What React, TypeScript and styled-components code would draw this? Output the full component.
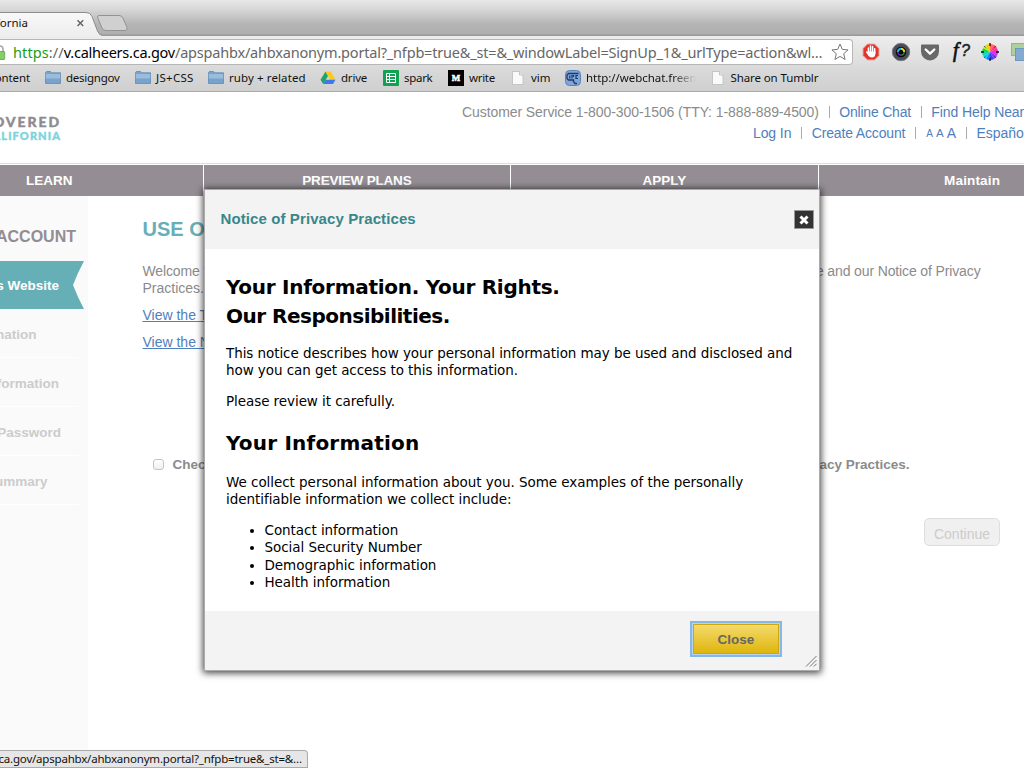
import React from 'react';
import styled, { createGlobalStyle, css } from 'styled-components';

const ui = `'Noto Sans', 'Open Sans', sans-serif`;
const arial = `'Liberation Sans', Arial, sans-serif`;
const verdana = `'DejaVu Sans', Verdana, sans-serif`;

const Global = createGlobalStyle`
  * { box-sizing: border-box; }
  body { margin: 0; background: #fff; overflow: hidden; }
`;

const Window = styled.div`
  position: relative;
  width: 1024px;
  height: 768px;
  overflow: hidden;
  display: flex;
  flex-direction: column;
  font-family: ${arial};
`;

const T = styled.span<{ $ls?: number }>`
  white-space: pre;
  letter-spacing: ${(p) => p.$ls ?? 0}px;
`;

/* browser chrome */
const TabStrip = styled.div`
  height: 36px;
  flex: none;
  background: linear-gradient(#e8e8e8 0, #dadada 8px, #b5b5b5 24px, #aeaeae 34px, #999 35px);
  display: flex;
`;
const Tab = styled.div`
  position: relative;
  width: 128px;
  height: 36px;
  display: flex;
  align-items: center;
  padding-top: 9px;
  font: 11.5px/20px ${ui};
  color: #111;
  svg { position: absolute; left: 0; top: 0; }
`;
const TabTitle = styled.div`
  position: relative;
  width: 28px;
  display: flex;
  justify-content: flex-end;
`;
const Toolbar = styled.div`
  height: 30px;
  flex: none;
  display: flex;
  align-items: flex-start;
  background: linear-gradient(#ededed, #dcdcdc);
  padding-top: 3px;
`;
const Omnibox = styled.div`
  width: 853px;
  height: 26px;
  flex: none;
  background: #fff;
  border: 1px solid #b6b6b6;
  border-left: 0;
  border-radius: 0 4px 4px 0;
  display: flex;
  align-items: center;
  font: 14.5px/24px ${ui};
  color: #666;
`;
const Lock = styled.div`
  width: 13px;
  height: 22px;
`;
const Address = styled.div`
  width: 818px;
  display: flex;
  .secure { color: #16a016; }
  .host { color: #000; }
`;
const Extensions = styled.div`
  display: flex;
  padding: 2px 0 0 7px;
  width: 171px;
  overflow: hidden;
`;
const ExtIcon = styled.div`
  width: 29.7px;
  flex: none;
  height: 22px;
  svg { display: block; }
`;
const Bookmarks = styled.div`
  height: 26px;
  flex: none;
  display: flex;
  align-items: center;
  background: linear-gradient(#dbdbdb, #cfcfcf);
  border-bottom: 1px solid #a9a9a9;
  padding-bottom: 2px;
  font: 11.5px/20px ${ui};
  color: #111;
  overflow: hidden;
`;
const Bookmark = styled.div<{ $w: number; $fade?: boolean }>`
  width: ${(p) => p.$w}px;
  flex: none;
  display: flex;
  align-items: center;
  gap: 5px;
  svg { flex: none; }
  ${(p) => p.$fade && css`
    span { width: 110px; overflow: hidden; mask-image: linear-gradient(90deg, #000 85px, transparent 110px); }
  `}
`;
const CutBookmark = styled(Bookmark)`
  span { width: 30px; display: flex; justify-content: flex-end; }
`;

/* site header */
const SiteHeader = styled.div`
  height: 72px;
  flex: none;
  display: flex;
  border-bottom: 1px solid #ddd;
  overflow: hidden;
`;
const Logo = styled.div`
  width: 61px;
  height: 60px;
  padding-top: 22px;
  display: flex;
  flex-direction: column;
  align-items: flex-end;
  font: bold 14px/15px Lato, ${arial};
  font-weight: 900;
  color: #8f8a90;
  -webkit-text-stroke: 0.4px;
  div + div { font-size: 11px; line-height: 13px; color: #7fd3dc; }
`;
const Utility = styled.div`
  width: 963px;
  padding-top: 10px;
  font-size: 14px;
  line-height: 21px;
  color: #8b8b8b;
`;
const UtilityRow = styled.div<{ $indent: number }>`
  display: flex;
  width: 963px;
  overflow: hidden;
  padding-left: ${(p) => p.$indent}px;
  a { color: #4f80bd; }
`;
const Bar = styled.i<{ $m?: number }>`
  flex: none;
  width: 1px;
  height: 12px;
  margin: 4px ${(p) => p.$m ?? 9.7}px 0;
  background: #aaa;
`;
const SizeA = styled.a<{ $s: number }>`
  font-size: ${(p) => p.$s}px;
  margin-right: ${(p) => (p.$s > 12 ? 0 : 3)}px;
`;
const Nav = styled.div`
  height: 32px;
  flex: none;
  border-top: 1px solid #fff;
  display: flex;
  margin-left: -104px;
`;
const NavItem = styled.div<{ $ls?: number }>`
  width: 307.6px;
  flex: none;
  background: #948e94;
  border-right: 1px solid #fff;
  color: #fff;
  font-weight: bold;
  font-size: 13.5px;
  line-height: 32px;
  height: 31px;
  letter-spacing: ${(p) => p.$ls ?? 0}px;
  text-align: center;
`;

/* page */
const Page = styled.div`
  flex: 1;
  display: flex;
  overflow: hidden;
`;
const Sidebar = styled.div`
  width: 88px;
  background: #fafafa;
  font-weight: bold;
  overflow: hidden;
`;
const SideHeading = styled.div`
  width: 76px;
  height: 65px;
  padding-top: 16px;
  display: flex;
  justify-content: flex-end;
  font-size: 16px;
  line-height: 49px;
  color: #938d93;
`;
const Step = styled.div<{ $end: number; $active?: boolean }>`
  width: ${(p) => (p.$active ? 84 : 79)}px;
  height: ${(p) => (p.$active ? 48 : 49)}px;
  padding-right: ${(p) => (p.$active ? 84 : 79) - p.$end}px;
  display: flex;
  justify-content: flex-end;
  overflow: hidden;
  font-size: 13.5px;
  line-height: ${(p) => (p.$active ? 49 : 51)}px;
  color: ${(p) => (p.$active ? '#fff' : '#ccc')};
  ${(p) => p.$active
    ? css`background: #66afb7; clip-path: polygon(0 0, 100% 0, 78px 25%, 73px 50%, 78px 75%, 100% 100%, 0 100%);`
    : css`border-bottom: 1px solid #fff;`}
`;
const Main = styled.div`
  width: 936px;
  padding: 20px 24px 0 54.5px;
  font-size: 14px;
  line-height: 17px;
  color: #8b8b8b;
`;
const Title = styled.div`
  font-size: 20px;
  font-weight: bold;
  line-height: 27px;
  color: #66afb7;
  margin-bottom: 20px;
`;
const Spread = styled.div<{ $w: number }>`
  width: ${(p) => p.$w}px;
  display: flex;
  justify-content: space-between;
`;
const DocLink = styled.a`
  display: block;
  margin-top: 10px;
  color: #4f80bd;
  text-decoration: underline;
`;
const Consent = styled.div`
  margin: 105px 0 0 10px;
  display: flex;
  align-items: center;
  gap: 9px;
  font-weight: bold;
  font-size: 13.5px;
`;
const Check = styled.i`
  width: 11px;
  height: 11px;
  border: 1px solid #c4c4c4;
  border-radius: 3px;
  background: linear-gradient(#fff, #f0f0f0);
`;
const Continue = styled.button`
  display: block;
  margin: 45px 0 0 auto;
  width: 76px;
  height: 28px;
  padding: 4px 0 0;
  border: 1px solid #dedede;
  border-radius: 5px;
  background: #f0f0f0;
  color: #ccc;
  font: 14px ${arial};
`;

/* dialog */
const Dialog = styled.div`
  position: absolute;
  left: 204px;
  top: 189px;
  width: 616px;
  height: 482px;
  background: #fff;
  border: 1px solid #aaa;
  box-shadow: 0 1px 7px 1px rgba(0, 0, 0, 0.75);
  display: flex;
  flex-direction: column;
`;
const DialogHead = styled.div`
  height: 59px;
  padding: 0 5px 0 15.5px;
  background: #f3f3f3;
  display: flex;
  align-items: center;
  justify-content: space-between;
  font-weight: bold;
  font-size: 15px;
  color: #37878b;
  > span { padding-bottom: 3px; }
`;
const CloseBox = styled.button`
  width: 20px;
  height: 19px;
  padding: 0;
  border: 1px solid #999;
  background: #333;
  svg { display: block; margin: auto; }
`;
const DialogBody = styled.div`
  height: 362px;
  padding: 24px 21px 0;
  font: 13.5px/17.3px ${verdana};
  color: #000;
  h2 { margin: 0; font-size: 20px; line-height: 29px; }
  p { margin: 14px 0 0; letter-spacing: -0.07px; }
  p + p { margin-top: 13px; }
  p + h2 { margin: 19px 0 0; }
  h2:nth-of-type(2) + p { margin-top: 16px; letter-spacing: -0.05px; }
  p span { letter-spacing: inherit; }
  ul { margin: 13.5px 0 0; padding-left: 38.5px; letter-spacing: -0.05px; }
`;
const DialogFoot = styled.div`
  height: 59px;
  background: #f3f3f3;
  display: flex;
  justify-content: flex-end;
  padding: 13px 40px 0 0;
`;
const CloseButton = styled.button`
  width: 86px;
  height: 30px;
  padding: 0;
  background: linear-gradient(#f4da6c, #dfb60d);
  border: 1px solid #cda70d;
  box-shadow: 0 0 0 1px #b9d4ef, 0 0 0 3px #86b7e6;
  font: bold 13.5px ${arial};
  color: #666;
`;
const Grip = styled.svg`
  position: absolute;
  right: 2px;
  bottom: 3px;
`;
const Status = styled.div`
  position: absolute;
  left: 0;
  bottom: 0;
  width: 308px;
  height: 18px;
  padding-right: 5px;
  display: flex;
  justify-content: flex-end;
  overflow: hidden;
  background: #e6e6e6;
  border: 1px solid #aaa;
  border-width: 1px 1px 1px 0;
  border-radius: 0 4px 0 0;
  font: 11.5px/16px ${ui};
  color: #111;
`;

const Folder = () => (
  <svg width="16" height="16" viewBox="0 0 16 16">
    <path d="M.5 3.2V2.5l1-1h4l1 1.3h9v10.7H.5z" fill="#78a3cc" stroke="#5e8ab5" strokeWidth=".8" />
    <path d="M.8 4h14.4v4.5H.8z" fill="#9bbddd" />
  </svg>
);
const Sheet = () => (
  <svg width="16" height="16" viewBox="0 0 16 16">
    <path d="M2.5 1.5h7l3.5 3.5v9.500H2.5z" fill="#fafafa" stroke="#bbb" strokeWidth=".8" />
    <path d="M9.5 1.5v3.500H13" fill="#e8e8e8" stroke="#bbb" strokeWidth=".8" />
  </svg>
);
const Drive = () => (
  <svg width="16" height="16" viewBox="0 0 16 16">
    <path d="M5.5 1.5 8 6 3.2 14 .5 9.700z" fill="#20a464" />
    <path d="M5.5 1.5h5l5 8.300h-5z" fill="#fbc916" />
    <path d="M5.6 9.800h9.900L13 14H3.200z" fill="#3d79e8" />
  </svg>
);
const Spark = () => (
  <svg width="16" height="16" viewBox="0 0 16 16">
    <rect width="16" height="16" rx="1" fill="#10a252" />
    <path d="M3.5 3.5h9v9h-9zM3.5 6.5h9M3.5 9.5h9M6.5 3.5v9" fill="none" stroke="#fff" strokeWidth="1" />
  </svg>
);
const Medium = () => (
  <svg width="16" height="16" viewBox="0 0 16 16">
    <rect width="16" height="16" fill="#000" />
    <text x="8" y="11.2" fontSize="9" fontWeight="bold" fontFamily="Liberation Serif, serif" textAnchor="middle" fill="#fff" stroke="#fff" strokeWidth=".5">M</text>
  </svg>
);
const Irc = () => (
  <svg width="16" height="16" viewBox="0 0 16 16">
    <rect x=".5" y=".5" width="15" height="15" rx="4" fill="#7ea6dc" stroke="#5b82b9" />
    <path d="M13.500 3.500H3.500L2 5v3.500L3.500 10h5v1.500l1.500 2h2" fill="none" stroke="#26385f" strokeWidth="1.300" />
    <path d="M4.800 5.500v3M7 8.500v-3h1.500v1.500M13 5.500h-2v3h2" fill="none" stroke="#26385f" strokeWidth="1.200" />
  </svg>
);

const wheel = ['#ff6a5a', '#ff3a6a', '#ff2ab0', '#e02aff', '#8a2aff', '#3a3cff', '#1a7aff', '#12c6f0', '#12e0a0', '#14d84a', '#b8e81a', '#ffc800'];
const Wheel = () => (
  <svg width="22" height="22" viewBox="-11 -11 22 22">
    {wheel.map((c, i) => {
      const a = ((i * 30 - 90) * Math.PI) / 180;
      const b = a + Math.PI / 6;
      return <path key={i} d={`M0 0L${8 * Math.cos(a)} ${8 * Math.sin(a)}A8 8 0 0 1 ${8 * Math.cos(b)} ${8 * Math.sin(b)}z`} fill={c} />;
    })}
    <path d="M0-9v3M0 9V6M-9 0h3M9 0H6" stroke="#111" strokeWidth="1.300" />
    <path d="M-6-6l1.500 1.500M6-6l-1.500 1.500M-6 6l1.500-1.500M6 6l-1.500-1.500" stroke="#333" strokeWidth=".7" />
  </svg>
);

const steps: [string, number][] = [
  ['Account Information', 36.5],
  ['Contact Information', 59],
  ['User ID & Password', 61],
  ['Account Summary', 47.5],
];

export default function App() {
  return (
    <Window>
      <Global />
      <TabStrip>
        <Tab>
          <svg width="128" height="36" viewBox="0 0 128 36">
            <defs>
              <linearGradient id="tab" x1="0" y1="0" x2="0" y2="1">
                <stop offset="0" stopColor="#f8f8f8" />
                <stop offset="1" stopColor="#ededed" />
              </linearGradient>
            </defs>
            <path d="M-1 12.500H86q4.500 0 6 4L97.500 31q2 4.500 5 4.500V37H-1z" fill="url(#tab)" />
            <path d="M-1 12.500H86q4.500 0 6 4L97.500 31q2 4.500 5 4.500" fill="none" stroke="#8d8d8d" />
            <path d="M99 15.500h20q3 0 4 2.500l4 9.500q1 3-2 3h-19q-3 0-4-2.500l-4-9.500q-1.500-3 1-3z" fill="#d0d0d0" stroke="#929292" />
            <path d="M77.500 20.300l5.700 5.700m0-5.700L77.500 26" stroke="#666" strokeWidth="1.500" />
          </svg>
          <TabTitle><T>Covered California</T></TabTitle>
        </Tab>
      </TabStrip>
      <Toolbar>
        <Omnibox>
          <Lock>
            <svg width="13" height="22" viewBox="0 0 13 22">
              <path d="M-3 11V8a3 3 0 0 1 6 0v3" fill="none" stroke="#a9a9a9" strokeWidth="1.600" />
              <path d="M-5 10.500h9q.7 0 .7.700v6.600q0 .7-.7.700h-9z" fill="#84cf6a" stroke="#58a545" strokeWidth=".8" />
            </svg>
          </Lock>
          <Address>
            <T className="secure" $ls={0.1}>https</T>
            <T $ls={0.1}>://</T>
            <T className="host" $ls={-0.25}>v.calheers.ca.gov</T>
            <T $ls={-0.19}>/apspahbx/ahbxanonym.portal?_nfpb=true&_st=&_windowLabel=SignUp_1&_urlType=action&wl…</T>
          </Address>
          <svg width="18" height="18" viewBox="0 0 18 18">
            <path d="M9 1l2.300 5.400 5.800.5-4.400 3.800 1.400 5.800L9 13.400l-5.100 3.100 1.400-5.800L.9 6.900l5.800-.5z" fill="#fff" stroke="#777" />
          </svg>
        </Omnibox>
        <Extensions>
          <ExtIcon>
            <svg width="22" height="22" viewBox="-11 -11 22 22">
              <path d="M-3.500-8h7L8-3.500v7L3.500 8h-7L-8 3.500v-7z" fill="#e4342b" stroke="#e9a7a1" strokeWidth="1" />
              <path d="M-2.600 1v-5M-.5 0v-6M1.600 0v-5.500M3.700 1v-4.200M-4.300 0l2 2.500" stroke="#fff" strokeWidth="1.500" strokeLinecap="round" />
              <path d="M-3.200-.5h7.600V2Q4 5.500.8 5.500-1.500 5.500-3.200 3z" fill="#fff" />
            </svg>
          </ExtIcon>
          <ExtIcon>
            <svg width="22" height="22" viewBox="-11 -11 22 22">
              <circle r="8.700" fill="#4a4d55" stroke="#777a82" strokeWidth="1" />
              <circle r="5.200" fill="#08090c" />
              <path d="M-3.200 0A3.200 3.200 0 0 1 0-3.200" stroke="#18b6d8" strokeWidth="2" fill="none" />
              <path d="M0-3.200A3.200 3.200 0 0 1 3.200 0" stroke="#e7d31c" strokeWidth="2" fill="none" />
              <path d="M3.200 0A3.200 3.200 0 0 1 0 3.200" stroke="#2b8a3c" strokeWidth="1.200" fill="none" />
              <path d="M0 3.200A3.200 3.200 0 0 1-3.200 0" stroke="#5b2bb5" strokeWidth="1.500" fill="none" />
            </svg>
          </ExtIcon>
          <ExtIcon>
            <svg width="22" height="22" viewBox="-11 -11 22 22">
              <path d="M-8-7.500H8q1 0 1 1V-.500A9 9 0 0 1-9-.500v-6q0-1 1-1z" fill="#686868" />
              <path d="M-4.300-2.500 0 1.600l4.300-4.100" fill="none" stroke="#fff" strokeWidth="2.300" strokeLinecap="round" strokeLinejoin="round" />
            </svg>
          </ExtIcon>
          <ExtIcon>
            <svg width="24" height="22" viewBox="0 0 24 22">
              <text x="4" y="15.500" fontFamily="Liberation Serif, serif" fontStyle="italic" fontSize="20" fill="#111" stroke="#111" strokeWidth=".7">f</text>
              <text x="12" y="15" fontFamily="Liberation Sans, sans-serif" fontStyle="italic" fontSize="16" fill="#222" stroke="#222" strokeWidth=".5">?</text>
            </svg>
          </ExtIcon>
          <ExtIcon><Wheel /></ExtIcon>
          <ExtIcon>
            <svg width="22" height="22" viewBox="0 0 22 22">
              <rect x="3.500" y="2.500" width="14" height="12" fill="#aed09a" stroke="#8fbb7a" />
              <rect x="7.500" y="7.500" width="14" height="12" fill="#83abd0" stroke="#6c98c2" />
            </svg>
          </ExtIcon>
        </Extensions>
      </Toolbar>
      <Bookmarks>
        <CutBookmark $w={45}><T $ls={-0.1}>content</T></CutBookmark>
        <Bookmark $w={90}><Folder /><T $ls={-0.25}>designgov</T></Bookmark>
        <Bookmark $w={73}><Folder /><T $ls={0.3}>JS+CSS</T></Bookmark>
        <Bookmark $w={112}><Folder /><T $ls={0.1}>ruby + related</T></Bookmark>
        <Bookmark $w={63}><Drive /><T $ls={-0.2}>drive</T></Bookmark>
        <Bookmark $w={65}><Spark /><T $ls={-0.3}>spark</T></Bookmark>
        <Bookmark $w={62}><Medium /><T $ls={-0.3}>write</T></Bookmark>
        <Bookmark $w={55}><Sheet /><T>vim</T></Bookmark>
        <Bookmark $w={144.5} $fade><Irc /><T $ls={-0.05}>http://webchat.freenode</T></Bookmark>
        <Bookmark $w={140}><Sheet /><T $ls={-0.1}>Share on Tumblr</T></Bookmark>
      </Bookmarks>

      <SiteHeader>
        <Logo>
          <div><T $ls={1.9}>COVERED</T></div>
          <div><T $ls={1.1}>CALIFORNIA</T></div>
        </Logo>
        <Utility>
          <UtilityRow $indent={401}>
            <T $ls={-0.08}>Customer Service 1-800-300-1506 (TTY: 1-888-889-4500)</T>
            <Bar />
            <T as="a" $ls={-0.2}>Online Chat</T>
            <Bar />
            <T as="a" $ls={-0.1}>Find Help Near You</T>
          </UtilityRow>
          <UtilityRow $indent={692}>
            <T as="a" $ls={-0.1}>Log In</T>
            <Bar />
            <T as="a" $ls={-0.15}>Create Account</T>
            <Bar $m={10} />
            <SizeA $s={10}>A</SizeA>
            <SizeA $s={11.5}>A</SizeA>
            <SizeA $s={14}>A</SizeA>
            <Bar />
            <T as="a">Español</T>
          </UtilityRow>
        </Utility>
      </SiteHeader>
      <Nav>
        <NavItem>LEARN</NavItem>
        <NavItem $ls={-0.2}>PREVIEW PLANS</NavItem>
        <NavItem>APPLY</NavItem>
        <NavItem $ls={0.15}>Maintain</NavItem>
      </Nav>
      <Page>
        <Sidebar>
          <SideHeading><T>CREATE AN ACCOUNT</T></SideHeading>
          <Step $end={59} $active><T>Use of this Website</T></Step>
          {steps.map(([label, end]) => (
            <Step key={label} $end={end}><T>{label}</T></Step>
          ))}
        </Sidebar>
        <Main>
          <Title>USE OF THIS WEBSITE</Title>
          <Spread $w={838}><T $ls={-0.13}>Welcome to Covered California.</T><T $ls={-0.13}>Please review our Terms of Use and our Notice of Privacy</T></Spread>
          <Spread $w={838}><T>Practices.</T></Spread>
          <DocLink>View the Terms of Use</DocLink>
          <DocLink>View the Notice of Privacy Practices</DocLink>
          <Consent>
            <Check />
            <Spread $w={737}><T>Check here to agree</T><T>to the Terms of Use and Notice of Privacy Practices.</T></Spread>
          </Consent>
          <Continue disabled>Continue</Continue>
        </Main>
      </Page>

      <Dialog>
        <DialogHead>
          <T $ls={0.1}>Notice of Privacy Practices</T>
          <CloseBox>
            <svg width="12" height="12" viewBox="0 0 12 12">
              <path d="M2.500 2.500l7 7M9.500 2.500l-7 7" stroke="#fff" strokeWidth="3" />
            </svg>
          </CloseBox>
        </DialogHead>
        <DialogBody>
          <h2><T $ls={-0.28}>Your Information. Your Rights.</T><br /><T $ls={-0.5}>Our Responsibilities.</T></h2>
          <p><T>This notice describes how your personal information may be used and disclosed and</T><br /><T>how you can get access to this information.</T></p>
          <p><T>Please review it carefully.</T></p>
          <h2><T $ls={0.2}>Your Information</T></h2>
          <p><T>We collect personal information about you. Some examples of the personally</T><br /><T>identifiable information we collect include:</T></p>
          <ul>
            <li>Contact information</li>
            <li>Social Security Number</li>
            <li>Demographic information</li>
            <li>Health information</li>
          </ul>
        </DialogBody>
        <DialogFoot><CloseButton>Close</CloseButton></DialogFoot>
        <Grip width="12" height="12" viewBox="0 0 12 12">
          <path d="M1 11.500L11.500 1M5 11.500L11.500 5M8.800 11.500l2.700-2.700" stroke="#777" />
        </Grip>
      </Dialog>
      <Status><T $ls={-0.2}>https://v.calheers.ca.gov/apspahbx/ahbxanonym.portal?_nfpb=true&_st=&…</T></Status>
    </Window>
  );
}
